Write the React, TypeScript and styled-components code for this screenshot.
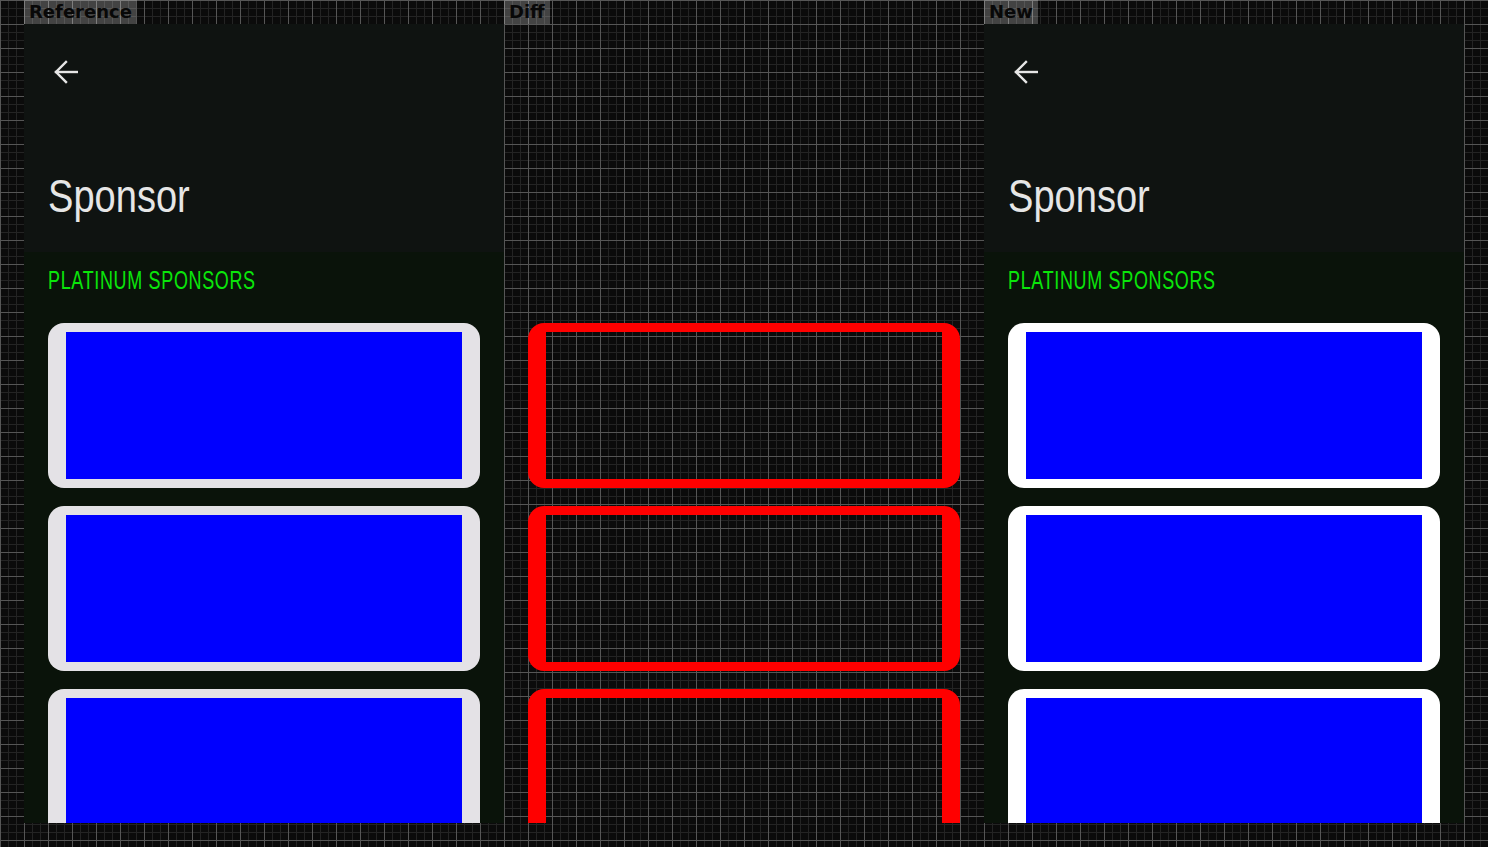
import React from "react";
import styled, { createGlobalStyle, css } from "styled-components";

const Global = createGlobalStyle`
  html, body { margin: 0; padding: 0; background: #0b0b0b; }
  #root { width: 1488px; height: 847px; }
`;

type Mode = "reference" | "diff" | "new";

const Page = styled.div`
  width: 1488px;
  height: 847px;
  box-sizing: border-box;
  padding: 0 24px;
  display: flex;
  overflow: hidden;
  background-color: #0b0b0b;
  background-image:
    linear-gradient(to right, #565656 1px, transparent 1px),
    linear-gradient(to bottom, #565656 1px, transparent 1px),
    linear-gradient(to right, #242424 1px, transparent 1px),
    linear-gradient(to bottom, #242424 1px, transparent 1px);
  background-size: 24px 24px, 24px 24px, 8px 8px, 8px 8px;
`;

const Column = styled.div`
  width: 480px;
  display: flex;
  flex-direction: column;
  align-items: flex-start;
`;

const Label = styled.div`
  height: 24px;
  padding: 0 5px;
  box-sizing: border-box;
  background: rgba(255, 255, 255, 0.23);
  color: #080808;
  font-family: "DejaVu Sans", sans-serif;
  font-weight: 700;
  font-size: 18px;
  line-height: 24px;
`;

const Panel = styled.div`
  width: 480px;
  height: 799px;
  overflow: hidden;
  display: flex;
  flex-direction: column;
`;

const Header = styled.div<{ $mode: Mode }>`
  height: 228px;
  flex: none;
  box-sizing: border-box;
  padding: 36px 24px 0;
  display: flex;
  flex-direction: column;
  align-items: flex-start;
  background: ${(p) => (p.$mode === "diff" ? "transparent" : "#0f1311")};
  ${(p) =>
    p.$mode === "diff" &&
    css`
      & > * {
        visibility: hidden;
      }
    `}
`;

const BackButton = styled.button`
  margin: 0 0 0 6px;
  padding: 0;
  border: 0;
  background: none;
  width: 24px;
  height: 24px;
  display: block;
  color: #e6e6e6;
`;

const Title = styled.h1`
  margin: 88px 0 0;
  font-family: "Liberation Sans", sans-serif;
  font-weight: 400;
  font-size: 47px;
  line-height: 47px;
  color: #e6e6e6;
  transform: scaleX(0.81);
  transform-origin: left center;
  white-space: nowrap;
`;

const Section = styled.div<{ $mode: Mode }>`
  flex: 1;
  box-sizing: border-box;
  padding: 15px 24px 0;
  display: flex;
  flex-direction: column;
  align-items: flex-start;
  background: ${(p) => (p.$mode === "diff" ? "transparent" : "#0a130a")};
`;

const SectionTitle = styled.h2<{ $mode: Mode }>`
  margin: 0 0 30px;
  font-family: "Liberation Sans", sans-serif;
  font-weight: 400;
  font-size: 26px;
  line-height: 26px;
  letter-spacing: 1px;
  color: #0ae60a;
  white-space: nowrap;
  transform: scaleX(0.69);
  transform-origin: left center;
  visibility: ${(p) => (p.$mode === "diff" ? "hidden" : "visible")};
`;

const CardList = styled.div`
  display: flex;
  flex-direction: column;
  gap: 18px;
`;

const Card = styled.div<{ $mode: Mode }>`
  flex: none;
  width: 432px;
  height: 165px;
  box-sizing: border-box;
  border-radius: 16px;
  padding: 9px 18px;
  ${(p) =>
    p.$mode === "diff"
      ? css`
          padding: 0;
          border-style: solid;
          border-color: #ff0000;
          border-width: 9px 18px;
          background: transparent;
        `
      : css`
          background: ${p.$mode === "new" ? "#ffffff" : "#e4e2e6"};
        `}
`;

const Logo = styled.div<{ $mode: Mode }>`
  width: 100%;
  height: 100%;
  background: ${(p) => (p.$mode === "diff" ? "transparent" : "#0000ff")};
`;

const ArrowIcon = () => (
  <svg width="24" height="24" viewBox="0 0 24 24" fill="none" stroke="currentColor" strokeWidth="2.4" strokeLinecap="square" strokeLinejoin="miter">
    <path d="M2 12H23" />
    <path d="M12 2L2 12L12 22" />
  </svg>
);

const Screen = ({ mode }: { mode: Mode }) => (
  <Panel>
    <Header $mode={mode}>
      <BackButton aria-label="Back">
        <ArrowIcon />
      </BackButton>
      <Title>Sponsor</Title>
    </Header>
    <Section $mode={mode}>
      <SectionTitle $mode={mode}>PLATINUM SPONSORS</SectionTitle>
      <CardList>
        {[0, 1, 2].map((i) => (
          <Card key={i} $mode={mode}>
            <Logo $mode={mode} />
          </Card>
        ))}
      </CardList>
    </Section>
  </Panel>
);

const columns: { mode: Mode; label: string }[] = [
  { mode: "reference", label: "Reference" },
  { mode: "diff", label: "Diff" },
  { mode: "new", label: "New" },
];

export default function App() {
  return (
    <>
      <Global />
      <Page>
        {columns.map((c) => (
          <Column key={c.mode}>
            <Label>{c.label}</Label>
            <Screen mode={c.mode} />
          </Column>
        ))}
      </Page>
    </>
  );
}
